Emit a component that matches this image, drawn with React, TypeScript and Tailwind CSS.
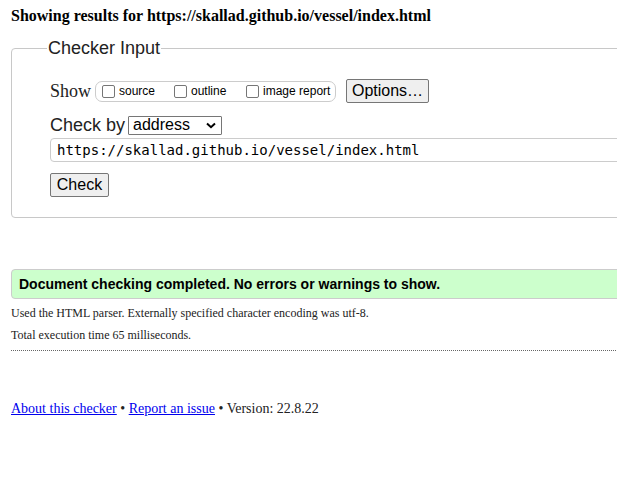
import React from "react";

const serif = "font-['Liberation_Serif',_'Times_New_Roman',_serif]";
const sans = "font-['Liberation_Sans',_Arial,_sans-serif]";

function Box({ label, className = "" }: { label: string; className?: string }) {
  return (
    <span className={`flex items-center whitespace-nowrap ${className}`}>
      <span className="inline-block w-[13px] h-[13px] border border-[#767676] rounded-[2px] bg-white mr-[4px]" />
      <span className="text-[12px] text-[#000]">{label}</span>
    </span>
  );
}

export default function App() {
  return (
    <div className="w-[617px] h-[485px] overflow-hidden bg-white">
      <div className={`w-[1000px] pl-[11px] ${serif} text-black`}>
        <h2 className="text-[16px] font-bold pt-[7px] leading-[18px]">
          Showing results for https://skallad.github.io/vessel/index.html
        </h2>
        <fieldset className="mt-[13px] border border-[#c8c8c8] rounded-[4px] pl-[38px] pr-4 pb-[20px] pt-[6px]">
          <legend className={`${sans} text-[18px] text-[#222] px-[1px] ml-[-3px] leading-[20px]`}>Checker Input</legend>
          <div className="flex items-center h-[26px] mt-[14px]">
            <span className="text-[18px] text-[#222] mr-[4px] leading-[22px]">Show</span>
            <div className={`${sans} flex items-center h-[21px] w-[241px] border border-[#ccc] rounded-[7px] pl-[6px]`}>
              <Box label="source" className="w-[72px]" />
              <Box label="outline" className="w-[72px]" />
              <Box label="image report" />
            </div>
            <button
              className={`${sans} ml-[10px] h-[24px] w-[83px] border border-[#767676] rounded-[2px] bg-[#efefef] text-[16px] text-black leading-[20px]`}
            >
              Options…
            </button>
          </div>
          <div className={`${sans} flex items-center mt-[11px] h-[20px]`}>
            <span className="text-[18px] text-[#222] mr-[3px] leading-[22px]">Check by</span>
            <div className="flex items-center justify-between h-[19px] w-[94px] border border-[#767676] rounded-[1px] pl-[4px] pr-[5px]">
              <span className="text-[16px] leading-[18px]">address</span>
              <svg width="10" height="7" viewBox="0 0 10 7">
                <path d="M1 1.5 L5 5.2 L9 1.5" fill="none" stroke="#000" strokeWidth="2" />
              </svg>
            </div>
          </div>
          <div className="mt-[3px] h-[24px] w-[900px] border border-[#ccc] rounded-[4px] flex items-center pl-[6px]">
            <span className="font-['DejaVu_Sans_Mono',_monospace] text-[14px] text-black">
              https://skallad.github.io/vessel/index.html
            </span>
          </div>
          <button
            className={`${sans} mt-[11px] h-[24px] w-[59px] border border-[#767676] rounded-[2px] bg-[#efefef] text-[16px] text-black leading-[20px] block`}
          >
            Check
          </button>
        </fieldset>
        <div className={`${sans} mt-[51px] h-[30px] border border-[#ccc] rounded-l-[4px] bg-[#ccffcc] flex items-center pl-[7px]`}>
          <span className="text-[14px] font-bold text-black">Document checking completed. No errors or warnings to show.</span>
        </div>
        <p className="text-[12px] text-[#222] mt-[6px] leading-[16px]">
          Used the HTML parser. Externally specified character encoding was utf-8.
        </p>
        <p className="text-[12px] text-[#222] mt-[6px] leading-[16px]">Total execution time 65 milliseconds.</p>
        <div className="mt-[7px] border-t border-dotted border-[#666]" />
        <p className="text-[14px] text-[#222] mt-[49px] leading-[18px]">
          <a href="#" className="text-[#0000ee] underline">About this checker</a> •{" "}
          <a href="#" className="text-[#0000ee] underline">Report an issue</a> • Version: 22.8.22
        </p>
      </div>
    </div>
  );
}
